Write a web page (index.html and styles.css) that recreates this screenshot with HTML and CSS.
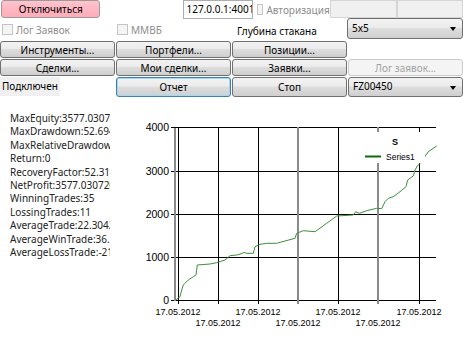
FILE: index.html
```html
<!DOCTYPE html>
<html lang="ru">
<head>
    <meta charset="UTF-8">
    <title>Тестер</title>
    <link rel="stylesheet" href="styles.css">
</head>
<body>
    <div class="window">
        <div class="row row-top">
            <button class="btn btn-disconnect">Отключиться</button>
            <div class="textbox address">127.0.0.1:4001</div>
            <label class="check auth"><span class="box"></span>Авторизация</label>
            <div class="textbox disabled login"></div>
            <div class="textbox disabled password"></div>
        </div>

        <div class="row row-options">
            <label class="check log-orders"><span class="box"></span>Лог Заявок</label>
            <label class="check micex"><span class="box"></span>ММВБ</label>
            <span class="depth-label">Глубина стакана</span>
            <div class="combo depth">5x5<span class="arrow"></span></div>
        </div>

        <div class="buttons">
            <button class="btn">Инструменты...</button>
            <button class="btn">Портфели...</button>
            <button class="btn">Позиции...</button>
            <span></span>

            <button class="btn">Сделки...</button>
            <button class="btn">Мои сделки...</button>
            <button class="btn">Заявки...</button>
            <button class="btn btn-disabled">Лог заявок...</button>

            <div class="status"><span>Подключен</span></div>
            <button class="btn btn-focus">Отчет</button>
            <button class="btn btn-stop">Стоп</button>
            <div class="combo security">FZ00450<span class="arrow"></span></div>
        </div>

        <div class="report">
            <div class="stats">
                <div>MaxEquity:3577.03072</div>
                <div>MaxDrawdown:52.694</div>
                <div>MaxRelativeDrawdown:0.0147</div>
                <div>Return:0</div>
                <div>RecoveryFactor:52.314</div>
                <div>NetProfit:3577.030720</div>
                <div>WinningTrades:35</div>
                <div>LossingTrades:11</div>
                <div>AverageTrade:22.3042</div>
                <div>AverageWinTrade:36.1</div>
                <div>AverageLossTrade:-21</div>
            </div>

            <svg class="chart" width="353" height="253" viewBox="110 97 353 253">
                <!-- horizontal grid -->
                <g stroke="#000" stroke-width="1">
                    <line x1="171" y1="127.5" x2="436" y2="127.5"/>
                    <line x1="171" y1="171.5" x2="436" y2="171.5"/>
                    <line x1="171" y1="214.5" x2="436" y2="214.5"/>
                    <line x1="171" y1="257.5" x2="436" y2="257.5"/>
                    <line x1="171" y1="300.5" x2="436" y2="300.5"/>
                </g>
                <!-- vertical grid -->
                <g stroke="#000" stroke-width="1">
                    <line x1="178.5" y1="127" x2="178.5" y2="304"/>
                    <line x1="218.5" y1="127" x2="218.5" y2="304"/>
                    <line x1="258.5" y1="127" x2="258.5" y2="304"/>
                    <line x1="338.5" y1="127" x2="338.5" y2="304"/>
                    <line x1="419.5" y1="127" x2="419.5" y2="304"/>
                </g>
                <g stroke="#8a8a8a" stroke-width="2">
                    <line x1="298" y1="127" x2="298" y2="304"/>
                    <line x1="378" y1="127" x2="378" y2="304"/>
                    <line x1="175" y1="128" x2="175" y2="301"/>
                </g>

                <g class="axis-y" text-anchor="end">
                    <text x="169" y="131">4000</text>
                    <text x="169" y="175">3000</text>
                    <text x="169" y="218">2000</text>
                    <text x="169" y="261">1000</text>
                    <text x="169" y="304">0</text>
                </g>
                <g class="axis-x" text-anchor="middle">
                    <text x="178" y="315">17.05.2012</text>
                    <text x="258" y="315">17.05.2012</text>
                    <text x="338" y="315">17.05.2012</text>
                    <text x="419" y="315">17.05.2012</text>
                    <text x="218" y="326">17.05.2012</text>
                    <text x="298" y="326">17.05.2012</text>
                    <text x="378" y="326">17.05.2012</text>
                </g>

                <polyline class="series" points="175.7,300 180,296.7 181.7,290 183.3,285 188.3,280 193.3,276.7 196,275 197.3,265 210,264 216.7,262.7 225,260 230,255.7 236.7,255 242.7,253.3 243.3,252.3 246.7,253.3 253.3,253.3 255,246.7 260,244.3 266.7,243.3 276.7,243.3 285,241 295,238.3 296.7,233.3 303.3,230.7 315,231.7 326.7,223.3 336.7,216 353.3,215 355.7,211.7 359.3,213.3 366.7,210.7 376.7,208.3 381.7,208.7 385,201.7 388.3,198.3 393.3,196.7 400,191.7 406,186.7 407.7,180 410,178.3 413.3,176 415,170 417.3,166 420,163.3 428.3,151.7 436.7,146"/>

                <rect x="361" y="132" width="64" height="31" fill="#fff"/>
                <text class="legend-title" x="395" y="145" text-anchor="middle">S</text>
                <line x1="365" y1="156.5" x2="381" y2="156.5" stroke="#0a6e0a" stroke-width="2"/>
                <text class="legend-item" x="386" y="159.5">Series1</text>
            </svg>
        </div>
    </div>
</body>
</html>
```

FILE: styles.css
```css
body {
    margin: 0;
    background: #fff;
    font-family: "Noto Sans", "Open Sans", sans-serif;
    font-size: 10px;
    color: #000;
}

.window {
    width: 463px;
    height: 350px;
    overflow: hidden;
}

.row {
    display: flex;
    align-items: center;
}

.row-top {
    height: 19px;
    align-items: flex-start;
}

.row-options {
    height: 21px;
}

/* buttons */
.btn {
    box-sizing: border-box;
    height: 18px;
    padding: 0;
    border: 1px solid #707070;
    border-radius: 3px;
    background: linear-gradient(#f3f3f3 0%, #ebebeb 45%, #dddddd 50%, #cfcfcf 100%);
    font: inherit;
    color: #000;
    line-height: 14px;
}

.btn-disconnect {
    width: 100px;
    height: 18px;
    margin-left: 1px;
    border-color: #9a9a9a;
    background: linear-gradient(#ffc4cd 0%, #ffb6c1 50%, #ffadb9 100%);
}

.btn-disabled {
    border-color: #c8cacc;
    background: #f4f4f4;
    color: #a3a3a3;
}

.btn-focus {
    border-color: #3c7fb1;
    box-shadow: inset 0 0 0 1px #a8d8f0;
}

/* text boxes */
.textbox {
    box-sizing: border-box;
    height: 19px;
    border: 1px solid #abadb3;
    background: #fff;
    padding: 1px 2px;
    line-height: 15px;
    white-space: nowrap;
    overflow: hidden;
}

.address {
    width: 70px;
    margin-left: 83px;
}

.textbox.disabled {
    height: 18px;
    background: #f0f0f0;
    border-color: #d5d5d5;
}

.login {
    width: 68px;
}

.password {
    width: 66px;
}

/* check boxes */
.check {
    display: flex;
    align-items: center;
    color: #8d8d8d;
    white-space: nowrap;
}

.check .box {
    box-sizing: border-box;
    width: 11px;
    height: 11px;
    margin-right: 3px;
    border: 1px solid #c4c4c4;
    background: #f4f4f4;
}

.auth {
    width: 73px;
    height: 19px;
    margin-left: 4px;
    overflow: hidden;
}

.log-orders {
    width: 115px;
    margin-left: 2px;
}

.micex {
    width: 120px;
}

.depth-label {
    width: 110px;
    padding-top: 3px;
}

/* combo boxes */
.combo {
    box-sizing: border-box;
    position: relative;
    height: 21px;
    padding: 0 4px;
    border: 1px solid #707070;
    border-radius: 3px;
    background: linear-gradient(#f3f3f3 0%, #ebebeb 45%, #dddddd 50%, #cfcfcf 100%);
    line-height: 18px;
}

.depth {
    width: 116px;
    align-self: flex-start;
    margin-top: -1px;
}

.arrow {
    position: absolute;
    right: 6px;
    top: 8px;
    border-left: 3px solid transparent;
    border-right: 3px solid transparent;
    border-top: 4px solid #000;
}

.buttons {
    display: grid;
    grid-template-columns: 115px 115px 115px 115px;
    grid-template-rows: 18px 18px 20px;
    column-gap: 1px;
    margin-top: 1px;
}

.buttons .btn {
    height: 17px;
}

.buttons .btn-focus,
.buttons .btn-stop {
    height: 20px;
}

.buttons .security {
    height: 20px;
    line-height: 17px;
}

.status span {
    display: inline-block;
    height: 19px;
    padding: 0 2px;
    background: #f0f0f0;
    line-height: 19px;
}

/* report */
.report {
    display: flex;
}

.stats {
    box-sizing: border-box;
    width: 110px;
    padding: 15px 0 0 10px;
    overflow: hidden;
    white-space: nowrap;
    line-height: 13.4px;
    color: #222;
}

.chart {
    display: block;
    font-family: "Liberation Sans", Arial, sans-serif;
}

.axis-y {
    font-size: 10.5px;
}

.axis-x {
    font-size: 9px;
}

.series {
    fill: none;
    stroke: #3d8f3d;
    stroke-width: 1;
}

.legend-title {
    font-size: 9px;
    font-weight: bold;
}

.legend-item {
    font-size: 8.5px;
}
```
